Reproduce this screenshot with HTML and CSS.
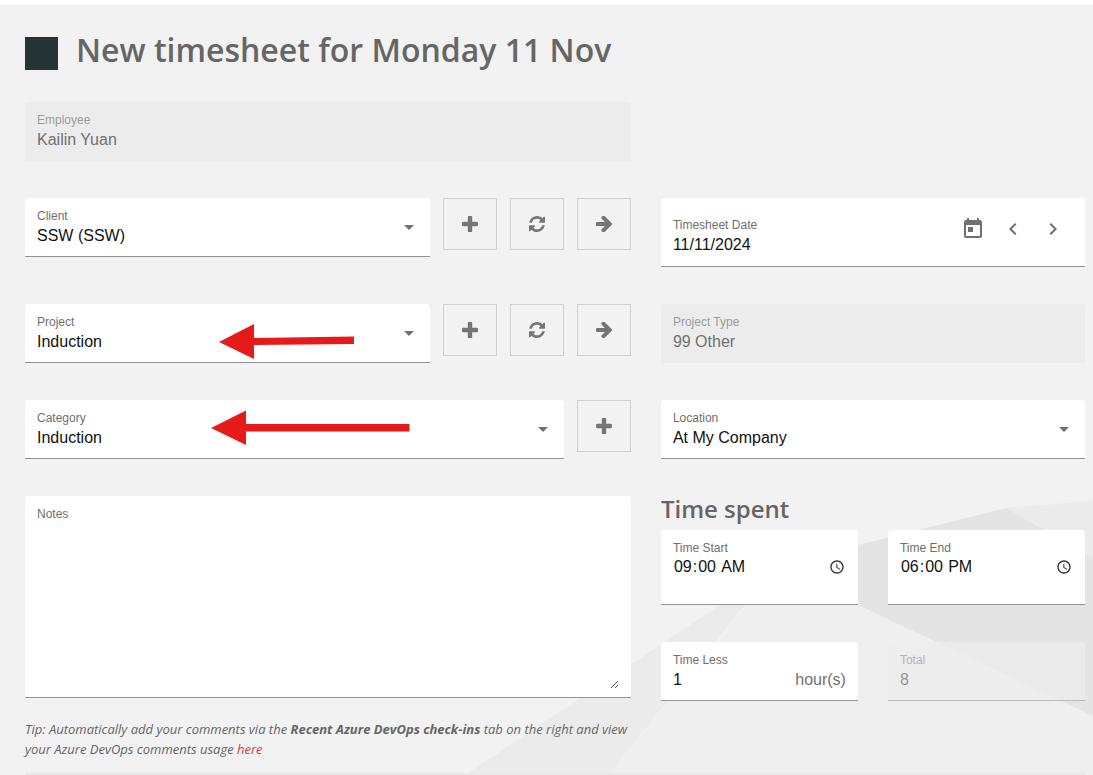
FILE: index.html
```html
<!DOCTYPE html>
<html lang="en">
<head>
    <meta charset="UTF-8">
    <meta name="viewport" content="width=device-width, initial-scale=1.0">
    <title>New timesheet</title>
    <link rel="stylesheet" href="styles.css">
</head>
<body>
    <!-- Shared icons -->
    <svg class="icon-defs" aria-hidden="true">
        <symbol id="icon-plus" viewBox="0 0 1408 1408">
            <path d="M1408 608v192q0 40-28 68t-68 28H896v416q0 40-28 68t-68 28H608q-40 0-68-28t-28-68V896H96q-40 0-68-28T0 800V608q0-40 28-68t68-28h416V96q0-40 28-68t68-28h192q40 0 68 28t28 68v416h416q40 0 68 28t28 68z"/>
        </symbol>
        <symbol id="icon-refresh" viewBox="0 0 1536 1536">
            <path d="M1511 928q0 5-1 7-64 268-268 434.500T764 1536q-146 0-282.500-55T238 1324l-129 129q-19 19-45 19t-45-19-19-45V960q0-26 19-45t45-19h448q26 0 45 19t19 45-19 45l-137 137q71 66 161 102t187 36q134 0 250-65t186-179q11-17 53-117 8-23 30-23h192q13 0 22.500 9.500t9.500 22.500zm25-800v448q0 26-19 45t-45 19h-448q-26 0-45-19t-19-45 19-45l138-138Q969 256 768 256q-134 0-250 65T332 500q-11 17-53 117-8 23-30 23H50q-13 0-22.500-9.500T18 608v-7q65-268 270-434.500T768 0q146 0 284 55.500T1297 212l130-129q19-19 45-19t45 19 19 45z"/>
        </symbol>
        <symbol id="icon-arrow" viewBox="0 0 1472 1472">
            <path d="M1472 736q0 54-37 91l-651 651q-39 37-91 37-51 0-90-37l-75-75q-38-38-38-91t38-91l293-293H117q-52 0-84.500-37.500T0 800V672q0-53 32.500-90.500T117 544h704L528 250q-38-36-38-90t38-90l75-75q38-38 90-38 53 0 91 38l651 651q37 35 37 90z"/>
        </symbol>
    </svg>

    <main class="page">
        <!-- Background shapes -->
        <svg class="backdrop" viewBox="0 0 628 275" aria-hidden="true">
            <polygon fill="#efefef" points="315,65 628,216 628,275 143,275"/>
            <polygon fill="#ebebeb" points="0,275 315,65 280,105 143,275"/>
            <polygon fill="#ebebeb" points="541,8 628,1 628,58"/>
            <polygon fill="#e4e4e4" points="315,65 393,45 541,8 628,58 628,216 393,105"/>
        </svg>

        <header class="page-header">
            <span class="status-square"></span>
            <h1>New timesheet for Monday 11 Nov</h1>
        </header>

        <form class="timesheet">
            <div class="left">
                <div class="field disabled">
                    <label for="employee">Employee</label>
                    <input type="text" id="employee" value="Kailin Yuan" disabled>
                </div>
            </div>

            <div class="left with-buttons">
                <div class="field select-field">
                    <label for="client">Client</label>
                    <select id="client">
                        <option>SSW (SSW)</option>
                    </select>
                </div>
                <button type="button" class="icon-button" aria-label="Add client"><svg><use href="#icon-plus"/></svg></button>
                <button type="button" class="icon-button" aria-label="Refresh clients"><svg><use href="#icon-refresh"/></svg></button>
                <button type="button" class="icon-button" aria-label="Open client"><svg><use href="#icon-arrow"/></svg></button>
            </div>
            <div class="right">
                <div class="field date-field">
                    <div class="date-text">
                        <label for="date">Timesheet Date</label>
                        <input type="text" id="date" value="11/11/2024">
                    </div>
                    <button type="button" class="plain-button" aria-label="Open calendar">
                        <svg viewBox="0 0 24 24"><path d="M19 3h-1V1h-2v2H8V1H6v2H5c-1.110 0-1.990.9-1.990 2L3 19c0 1.100.890 2 2 2h14c1.100 0 2-.9 2-2V5c0-1.100-.9-2-2-2zm0 16H5V8h14v11zM7 10h5v5H7z"/></svg>
                    </button>
                    <button type="button" class="plain-button" aria-label="Previous day">
                        <svg viewBox="0 0 24 24"><path d="M15.410 7.410L14 6l-6 6 6 6 1.410-1.410L10.830 12z"/></svg>
                    </button>
                    <button type="button" class="plain-button" aria-label="Next day">
                        <svg viewBox="0 0 24 24"><path d="M10 6L8.590 7.410 13.170 12l-4.580 4.590L10 18l6-6z"/></svg>
                    </button>
                </div>
            </div>

            <div class="left with-buttons">
                <div class="field select-field">
                    <label for="project">Project</label>
                    <select id="project">
                        <option>Induction</option>
                    </select>
                    <svg class="pointer pointer-project" viewBox="0 0 136 36" aria-hidden="true">
                        <path d="M0 18L35 0v14l100-1.500v7.500L35 21v14z"/>
                    </svg>
                </div>
                <button type="button" class="icon-button" aria-label="Add project"><svg><use href="#icon-plus"/></svg></button>
                <button type="button" class="icon-button" aria-label="Refresh projects"><svg><use href="#icon-refresh"/></svg></button>
                <button type="button" class="icon-button" aria-label="Open project"><svg><use href="#icon-arrow"/></svg></button>
            </div>
            <div class="right">
                <div class="field disabled">
                    <label for="project-type">Project Type</label>
                    <input type="text" id="project-type" value="99 Other" disabled>
                </div>
            </div>

            <div class="left with-buttons">
                <div class="field select-field">
                    <label for="category">Category</label>
                    <select id="category">
                        <option>Induction</option>
                    </select>
                    <svg class="pointer pointer-category" viewBox="0 0 199 36" aria-hidden="true">
                        <path d="M0 18L35 0.500v13.500h163.500v7.500H35v13.500z"/>
                    </svg>
                </div>
                <button type="button" class="icon-button" aria-label="Add category"><svg><use href="#icon-plus"/></svg></button>
            </div>
            <div class="right">
                <div class="field select-field">
                    <label for="location">Location</label>
                    <select id="location">
                        <option>At My Company</option>
                    </select>
                </div>
            </div>

            <div class="left">
                <div class="field notes-field">
                    <label for="notes">Notes</label>
                    <textarea id="notes"></textarea>
                </div>
                <p class="tip">Tip: Automatically add your comments via the <strong>Recent Azure DevOps check-ins</strong> tab on the right and view your Azure DevOps comments usage <a href="#">here</a></p>
            </div>
            <div class="right">
                <h2>Time spent</h2>
                <div class="times">
                    <div class="field time-field">
                        <label for="time-start">Time Start</label>
                        <input type="time" id="time-start" value="09:00">
                    </div>
                    <div class="field time-field">
                        <label for="time-end">Time End</label>
                        <input type="time" id="time-end" value="18:00">
                    </div>
                    <div class="field">
                        <label for="time-less">Time Less</label>
                        <div class="with-suffix">
                            <input type="number" id="time-less" value="1">
                            <span>hour(s)</span>
                        </div>
                    </div>
                    <div class="field disabled total-field">
                        <label for="total">Total</label>
                        <input type="text" id="total" value="8" disabled>
                    </div>
                </div>
            </div>
        </form>
        <div class="divider"></div>
    </main>
</body>
</html>
```

FILE: styles.css
```css
* {
  box-sizing: border-box;
}

body {
  margin: 0;
  background-color: #f2f2f2;
  font-family: "Open Sans", sans-serif;
  color: #666;
}

.icon-defs {
  display: none;
}

.page {
  position: relative;
  min-height: 100vh;
  padding: 24px 8px 0 25px;
  border-top: 5px solid #fff;
  overflow: hidden;
}

/* Decorative shapes behind the form */
.backdrop {
  position: absolute;
  right: 0;
  bottom: 0;
  width: 628px;
  height: 275px;
}

.page-header,
.timesheet,
.divider {
  position: relative;
}

.page-header {
  display: flex;
  align-items: flex-end;
  gap: 18px;
  margin-bottom: 32px;
}

.status-square {
  width: 33px;
  height: 33px;
  background-color: #273435;
}

h1 {
  margin: 0;
  font-size: 32px;
  line-height: 41px;
  font-weight: 600;
}

h2 {
  margin: 0;
  font-size: 24px;
  line-height: 26px;
  padding-bottom: 8px;
  font-weight: 600;
}

.timesheet {
  display: grid;
  grid-template-columns: 10fr 7fr;
  gap: 37px 30px;
}

.left {
  grid-column: 1;
  min-width: 0;
}

.right {
  grid-column: 2;
  min-width: 0;
}

.with-buttons {
  display: flex;
  align-items: flex-start;
  gap: 13px;
}

.with-buttons .field {
  flex: 1;
}

/* Fields */
.field {
  position: relative;
  padding: 10px 12px 8px;
  background-color: #fff;
  border-bottom: 1px solid #949494;
  border-radius: 4px 4px 0 0;
  font-family: "Liberation Sans", Arial, sans-serif;
}

.field label {
  display: block;
  font-size: 12px;
  line-height: 16px;
  color: #6f6f6f;
}

.field input,
.field select,
.field textarea {
  display: block;
  width: 100%;
  height: 24px;
  margin: 0;
  padding: 0;
  border: none;
  outline: none;
  background: transparent;
  font-family: inherit;
  font-size: 16px;
  color: #111;
}

.field.disabled {
  background-color: #ececec;
  border-bottom-color: #ececec;
}

.field.disabled label {
  color: #9c9c9c;
}

.field.disabled input {
  color: #717171;
}

.select-field {
  padding-bottom: 10px;
}

.select-field select {
  height: 22px;
  appearance: none;
}

.select-field::after {
  content: "";
  position: absolute;
  right: 16px;
  top: 27px;
  border: 5px solid transparent;
  border-top-color: #707070;
  border-bottom: none;
  pointer-events: none;
}

.icon-button {
  display: flex;
  align-items: center;
  justify-content: center;
  width: 54px;
  height: 52px;
  padding: 0;
  background: transparent;
  border: 1px solid #d0d0d0;
  cursor: pointer;
}

.icon-button svg {
  width: 16px;
  height: 16px;
  fill: #757575;
  overflow: visible;
}

.date-field {
  display: flex;
  padding: 19px 12px 9px;
}

.date-text {
  flex: 1;
  min-width: 0;
}

.plain-button {
  width: 40px;
  height: 24px;
  padding: 0;
  border: none;
  background: transparent;
  cursor: pointer;
}

.plain-button svg {
  display: block;
  width: 24px;
  height: 24px;
  margin: 0 auto;
  fill: #707070;
}

.notes-field textarea {
  height: 167px;
  resize: vertical;
}

.tip {
  margin: 21px 0 0;
  font-size: 13px;
  line-height: 20px;
  font-style: italic;
}

.tip a {
  color: #d63c46;
  text-decoration: none;
}

.times {
  display: grid;
  grid-template-columns: 1fr 1fr;
  gap: 37px 30px;
}

.time-field {
  padding-bottom: 26px;
}

.time-field input {
  height: 22px;
}

.time-field input::-webkit-calendar-picker-indicator {
  margin-right: -3px;
  opacity: 0.8;
}

.with-suffix {
  display: flex;
  align-items: center;
}

.with-suffix input {
  flex: 1;
  min-width: 0;
}

.with-suffix span {
  font-size: 16px;
  color: #707070;
}

.field.total-field {
  background-color: rgba(236, 236, 236, 0.7);
  border-bottom-color: #bdbdbd;
}

.total-field label,
.total-field input {
  opacity: 0.7;
}

/* Red arrows drawn over the fields */
.pointer {
  position: absolute;
  height: 36px;
  fill: #e71a1a;
  pointer-events: none;
}

.pointer-project {
  left: 194px;
  top: 20px;
  width: 136px;
}

.pointer-category {
  left: 186px;
  top: 10px;
  width: 199px;
}

.divider {
  height: 2px;
  margin-top: 14px;
  background-color: #e8e8e8;
}
```
